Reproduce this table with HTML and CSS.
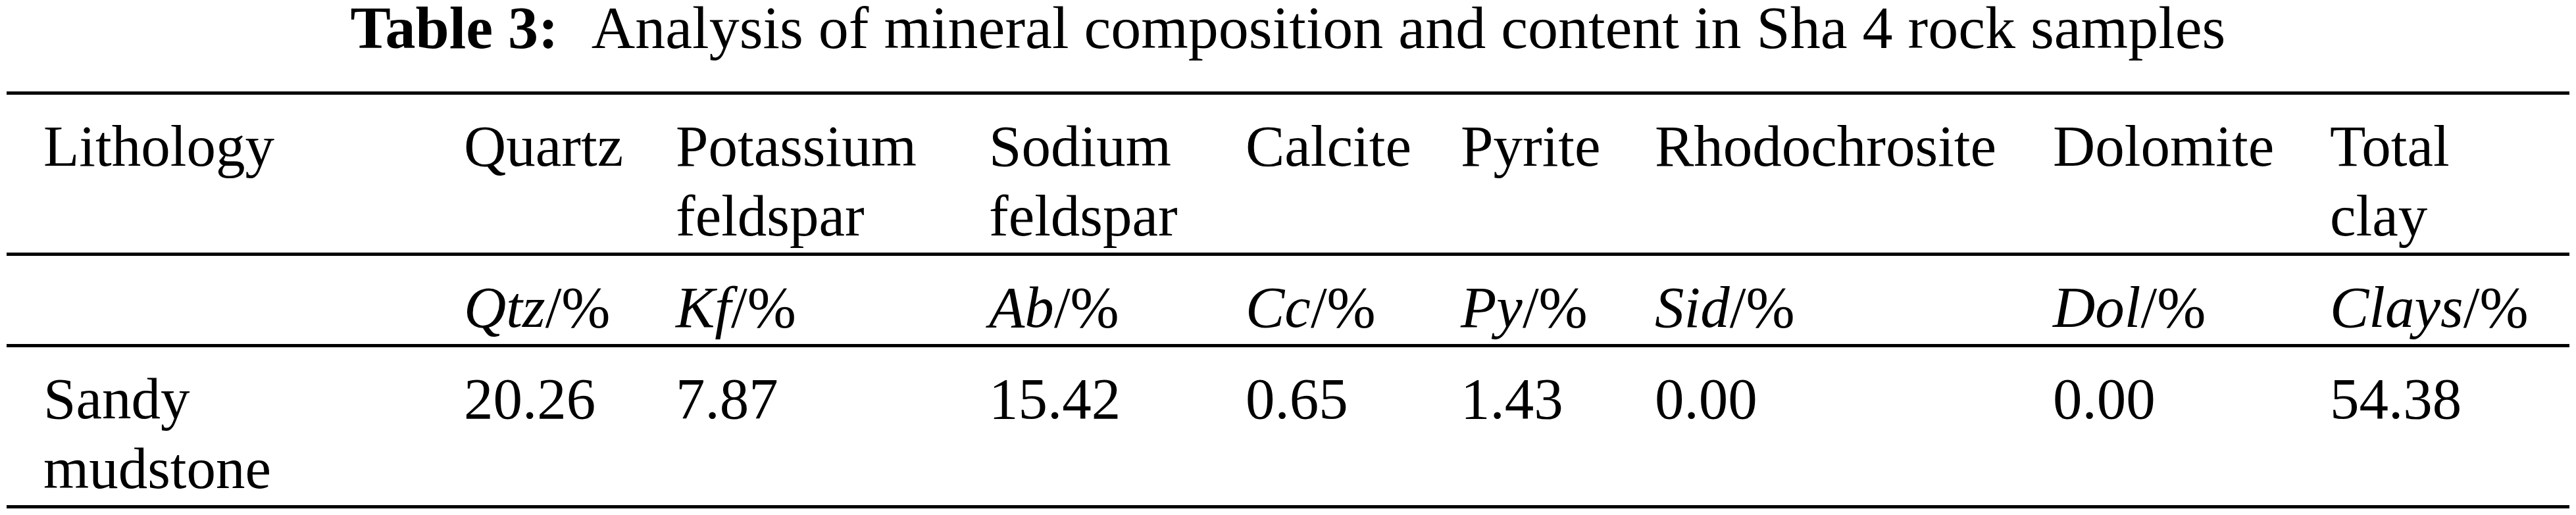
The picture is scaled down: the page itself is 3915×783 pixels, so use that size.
FILE: index.html
```html
<!DOCTYPE html>
<html lang="en">

<head>
    <meta charset="UTF-8">
    <title>Table 3</title>
    <link rel="stylesheet" href="styles.css">
</head>

<body>
    <div class="caption"><b class="label">Table 3:</b> Analysis of mineral composition and content in Sha 4 rock samples</div>

    <table class="minerals">
        <colgroup>
            <col class="c-lith">
            <col class="c-qtz">
            <col class="c-kf">
            <col class="c-ab">
            <col class="c-cc">
            <col class="c-py">
            <col class="c-sid">
            <col class="c-dol">
            <col class="c-clay">
        </colgroup>
        <thead>
            <tr>
                <th>Lithology</th>
                <th>Quartz</th>
                <th>Potassium feldspar</th>
                <th>Sodium feldspar</th>
                <th>Calcite</th>
                <th>Pyrite</th>
                <th>Rhodochrosite</th>
                <th>Dolomite</th>
                <th>Total clay</th>
            </tr>
            <tr>
                <th></th>
                <th><i>Qtz</i>/%</th>
                <th><i>Kf</i>/%</th>
                <th><i>Ab</i>/%</th>
                <th><i>Cc</i>/%</th>
                <th><i>Py</i>/%</th>
                <th><i>Sid</i>/%</th>
                <th><i>Dol</i>/%</th>
                <th><i>Clays</i>/%</th>
            </tr>
        </thead>
        <tbody>
            <tr>
                <td>Sandy mudstone</td>
                <td>20.26</td>
                <td>7.87</td>
                <td>15.42</td>
                <td>0.65</td>
                <td>1.43</td>
                <td>0.00</td>
                <td>0.00</td>
                <td>54.38</td>
            </tr>
        </tbody>
    </table>
</body>

</html>
```

FILE: styles.css
```css
* {
    margin: 0;
    padding: 0;
}

body {
    background-color: white;
    color: black;
    font-family: "Liberation Serif", "Times New Roman", serif;
    font-size: 89px;
}

.caption {
    text-align: center;
    font-size: 92px;
    line-height: 84px;
    margin-bottom: 55px;
}

.caption .label {
    margin-right: 0.35em;
}

.minerals {
    margin-left: 10px;
    width: 3895px;
    table-layout: fixed;
    border-collapse: separate;
    border-spacing: 0;
    border-top: 5px solid black;
}

.c-lith { width: 695px; }
.c-qtz { width: 322px; }
.c-kf { width: 476px; }
.c-ab { width: 390px; }
.c-cc { width: 327px; }
.c-py { width: 295px; }
.c-sid { width: 605px; }
.c-dol { width: 421px; }
.c-clay { width: 364px; }

.minerals th,
.minerals td {
    font-weight: normal;
    text-align: left;
    vertical-align: top;
    line-height: 106px;
    padding: 25px 40px 3px 0;
    border-bottom: 5px solid black;
}

.minerals th:first-child,
.minerals td:first-child {
    padding-left: 56px;
    padding-right: 100px;
}
```
